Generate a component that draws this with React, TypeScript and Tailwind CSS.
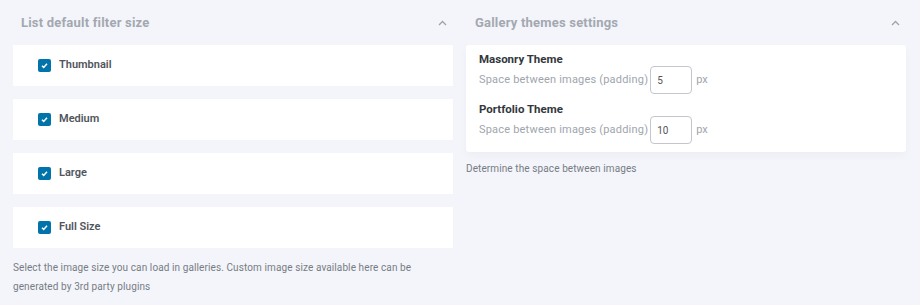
import React from "react";

const sizes = ["Thumbnail", "Medium", "Large", "Full Size"];

const Chevron = () => (
  <svg width="9" height="6" viewBox="0 0 9 6" className="text-[#9ca3af]">
    <path d="M1 5l3.5-3.5L8 5" fill="none" stroke="currentColor" strokeWidth="1.3" />
  </svg>
);

const Check = () => (
  <span className="flex h-[13px] w-[13px] items-center justify-center rounded-[2px] bg-[#0073aa]">
    <svg width="9" height="9" viewBox="0 0 9 9">
      <path d="M2 4.8l1.7 1.6L7 2.8" fill="none" stroke="white" strokeWidth="1.5" />
    </svg>
  </span>
);

const ThemeRow = ({ title, value }: { title: string; value: string }) => (
  <div>
    <div className="text-[11.5px] font-bold leading-[14px] text-[#32373c]">{title}</div>
    <div className="flex items-center">
      <span className="text-[11px] tracking-[0.2px] text-[#a0a5ad]">Space between images (padding)</span>
      <div className="ml-[2px] flex h-[28px] w-[42px] items-center rounded-[4px] border border-[#c3c6cc] px-[6px] text-[10px] text-[#555]">
        {value}
      </div>
      <span className="ml-[4px] text-[11px] text-[#a0a5ad]">px</span>
    </div>
  </div>
);

const App = () => {
  return (
    <div className="h-[305px] w-[920px] bg-[#f3f5fa] font-['Roboto',sans-serif]">
      <div className="grid grid-cols-2 gap-[13px] pl-[13px] pr-[14px]">
        <div>
          <div className="flex h-[45px] items-center justify-between pl-[8px] pr-[6px]">
            <h2 className="text-[13px] font-bold tracking-[0.2px] text-[#a3a8b0]">List default filter size</h2>
            <Chevron />
          </div>
          <div className="flex flex-col gap-[13px]">
            {sizes.map((s) => (
              <div key={s} className="flex h-[41px] items-center bg-white pl-[25px]">
                <Check />
                <span className="ml-[8px] text-[11px] font-semibold text-[#50555c]">{s}</span>
              </div>
            ))}
          </div>
          <p className="mt-[10px] text-[10px] leading-[19px] tracking-[0.1px] text-[#777c84]">
            Select the image size you can load in galleries. Custom image size available here can be generated by 3rd party plugins
          </p>
        </div>
        <div>
          <div className="flex h-[45px] items-center justify-between pl-[9px] pr-[6px]">
            <h2 className="text-[13px] font-bold tracking-[0.2px] text-[#a3a8b0]">Gallery themes settings</h2>
            <Chevron />
          </div>
          <div className="flex flex-col gap-[8px] rounded-[3px] bg-white px-[13px] pt-[7px] pb-[8px] shadow-[0_4px_10px_rgba(0,0,0,0.03)]">
            <ThemeRow title="Masonry Theme" value="5" />
            <ThemeRow title="Portfolio Theme" value="10" />
          </div>
          <p className="mt-[9px] text-[10px] tracking-[0.1px] text-[#777c84]">Determine the space between images</p>
        </div>
      </div>
    </div>
  );
};

export default App;
